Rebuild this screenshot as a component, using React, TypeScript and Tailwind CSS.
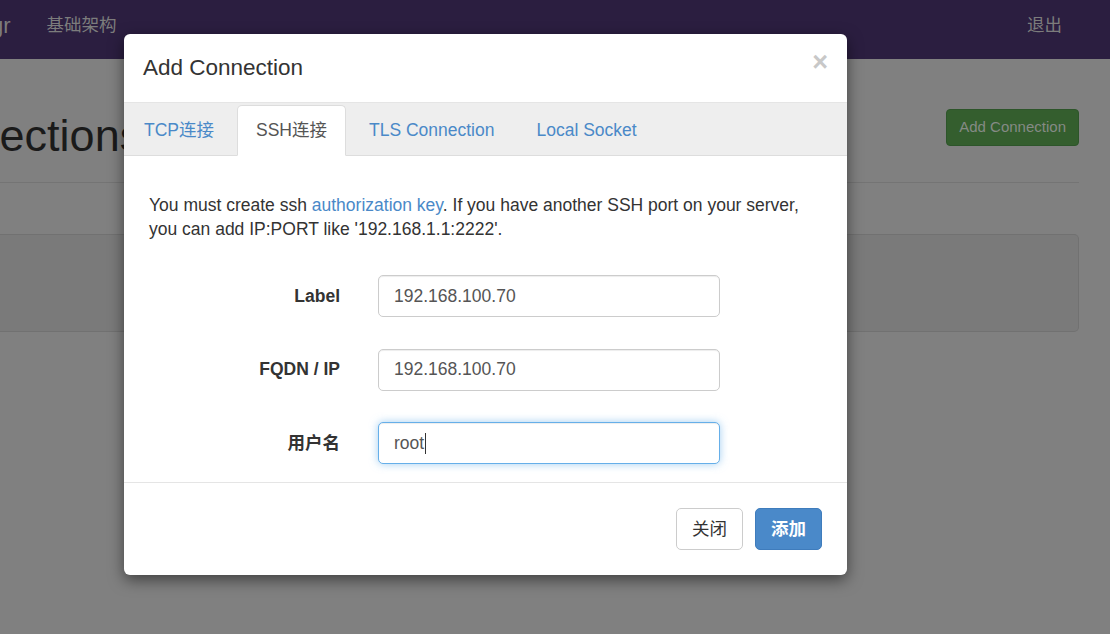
import React from "react";

const FONT = { fontFamily: '"Liberation Sans", Arial, "Noto Sans CJK SC", sans-serif' };

function Field({ label, value, focused }: { label: string; value: string; focused?: boolean }) {
  return (
    <div className="flex items-center">
      <div className="w-[191px] text-right font-bold text-[17.5px] text-[#333]">{label}</div>
      <div
        className={
          "ml-[38px] w-[342px] h-[42px] rounded-[5px] bg-white flex items-center pl-[15px] text-[17.5px] text-[#555] " +
          (focused
            ? "border border-[#66afe9] shadow-[inset_0_1px_1px_rgba(0,0,0,0.075),0_0_8px_rgba(102,175,233,0.6)]"
            : "border border-[#ccc] shadow-[inset_0_1px_1px_rgba(0,0,0,0.075)]")
        }
      >
        <span>{value}</span>
        {focused && <span className="inline-block w-px h-[21px] bg-[#333] ml-[1px]" />}
      </div>
    </div>
  );
}

export default function App() {
  return (
    <div className="relative w-[1110px] h-[634px] overflow-hidden bg-[#808080]" style={FONT}>
      {/* navbar */}
      <div className="h-[59px] bg-[#2b1e40] flex items-start pt-[13px] text-[17.5px] leading-[25px] text-[#7c7c7c]">
        <span className="ml-[-9px] text-[22px] leading-[25px]">gr</span>
        <span className="ml-[36px]">基础架构</span>
        <span className="ml-auto mr-[48px]">退出</span>
      </div>

      {/* page content (dimmed) */}
      <div className="pr-[31px]">
        <div className="flex items-start justify-between h-[123px]">
          <h1 className="ml-[-108px] text-[45px] text-[#1a1a1a] leading-none mt-[54px]">Connections</h1>
          <div className="mt-[50px] h-[37px] px-[12px] rounded-[4px] bg-[#345e2e] border border-[#2d552a] flex items-center text-[15px] text-[#858a85]">
            Add Connection
          </div>
        </div>
        <div className="h-px bg-[#747474]" />
        <div className="mt-[51px] h-[98px] rounded-r-[5px] bg-[#7a7a7a] border border-[#717171] border-l-0" />
      </div>

      {/* modal */}
      <div className="absolute left-[124px] top-[34px] w-[723px] h-[541px] bg-white rounded-[6px] shadow-[0_5px_15px_rgba(0,0,0,0.5)] flex flex-col overflow-hidden">
        <div className="h-[69px] flex items-start justify-between pl-[19px] pr-[19px] border-b border-[#e5e5e5]">
          <div className="mt-[20px] text-[22.5px] text-[#333] leading-[28px]">Add Connection</div>
          <div className="mt-[15px] text-[27px] font-bold text-[#c8c8c8] leading-none">×</div>
        </div>
        <div className="h-[53px] bg-[#eee] border-b border-[#ddd] flex items-end gap-[4px] pl-px text-[17.5px] text-[#4a89c8]">
          <div className="h-[50px] px-[19px] flex items-center">TCP连接</div>
          <div className="h-[51px] mb-[-1px] px-[18px] flex items-center bg-white border border-[#ddd] border-b-white rounded-t-[5px] text-[#555]">
            SSH连接
          </div>
          <div className="h-[50px] px-[19px] flex items-center">TLS Connection</div>
          <div className="h-[50px] px-[19px] flex items-center">Local Socket</div>
        </div>
        <div className="flex-1 px-[25px] pt-[37px] border-b border-[#e5e5e5]">
          <p className="text-[17.5px] leading-[24px] text-[#333]">
            You must create ssh <span className="text-[#4a89c8]">authorization key</span>. If you have another SSH port on your server,
            you can add IP:PORT like '192.168.1.1:2222'.
          </p>
          <div className="mt-[34px] flex flex-col gap-[31.5px]">
            <Field label="Label" value="192.168.100.70" />
            <Field label="FQDN / IP" value="192.168.100.70" />
            <Field label="用户名" value="root" focused />
          </div>
        </div>
        <div className="h-[92px] flex items-center justify-end gap-[12px] pr-[25px]">
          <div className="h-[42px] w-[67px] rounded-[5px] border border-[#ccc] bg-white flex items-center justify-center text-[17.5px] text-[#333]">
            关闭
          </div>
          <div className="h-[42px] w-[67px] rounded-[5px] border border-[#3f7cbc] bg-[#4a89c9] flex items-center justify-center text-[17.5px] font-bold text-white">
            添加
          </div>
        </div>
      </div>
    </div>
  );
}
